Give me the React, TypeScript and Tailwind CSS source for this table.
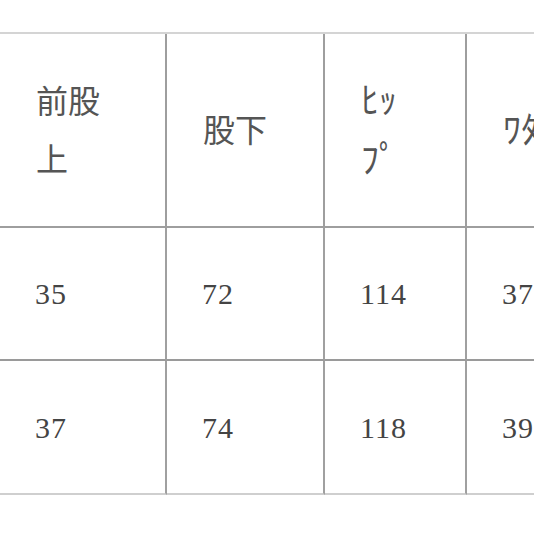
import React from 'react';

const jp = { fontFamily: '"Noto Sans CJK JP", "Noto Sans", sans-serif' };

const headers: React.ReactNode[] = [
  <>前股<br />上</>,
  <>股下</>,
  <span className="text-[36px]">ﾋｯ<br />ﾌﾟ</span>,
  <span className="text-[36px]">ﾜﾀﾘ</span>,
];

const rows = [
  ['35', '72', '114', '37'],
  ['37', '74', '118', '39'],
];

const cols = ['w-[167px]', 'w-[158px]', 'w-[142px]', 'w-[160px]'];

export default function App() {
  return (
    <div className="w-[534px] h-[534px] bg-white overflow-hidden">
      <div className="pt-[32px]">
        <div className="w-[627px] border-t-2 border-[#d4d4d4]">
          {/* header row */}
          <div className="flex h-[194px]" style={jp}>
            {headers.map((h, i) => (
              <div
                key={i}
                className={`${cols[i]} shrink-0 flex items-center pl-[36px] border-r-2 border-b-2 border-[#9e9e9e] text-[32px] leading-[58px] text-[#555] whitespace-nowrap`}
              >
                <div className="-mt-[4px]">{h}</div>
              </div>
            ))}
          </div>

          {rows.map((r, ri) => (
            <div
              key={ri}
              className={`flex ${ri === 0 ? 'h-[133px]' : 'h-[134px]'}`}
              style={{ fontFamily: '"Liberation Serif", "Times New Roman", serif' }}
            >
              {r.map((v, ci) => (
                <div
                  key={ci}
                  className={`${cols[ci]} shrink-0 flex items-center pl-[35px] border-r-2 border-r-[#a0a0a0] border-b-2 ${
                    ri === rows.length - 1 ? 'border-b-[#cfcfcf]' : 'border-b-[#9a9a9a]'
                  } text-[30px] tracking-[1px] text-[#444]`}
                >
                  {v}
                </div>
              ))}
            </div>
          ))}
        </div>
      </div>
    </div>
  );
}
